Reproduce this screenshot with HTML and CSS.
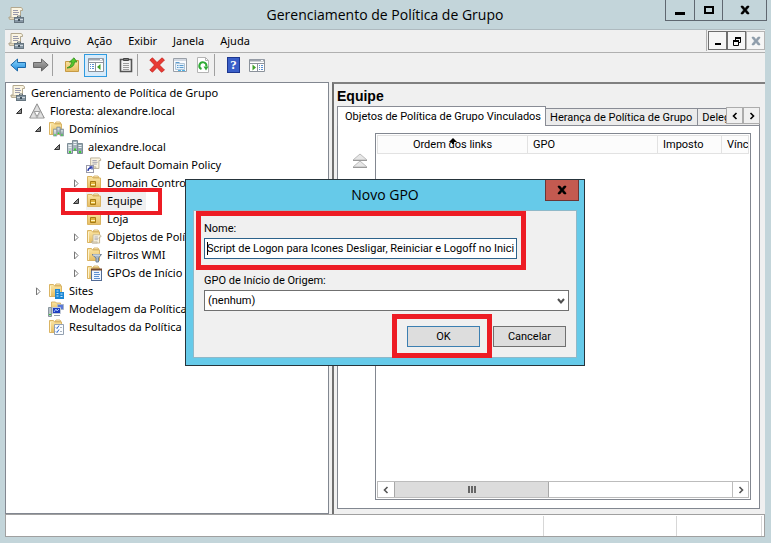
FILE: index.html
```html
<!DOCTYPE html>
<html lang="pt-BR">

<head>
  <meta charset="UTF-8">
  <meta name="viewport" content="width=device-width, initial-scale=1.0">
  <title>Gerenciamento de Política de Grupo</title>
  <link rel="stylesheet" href="styles.css">
</head>

<body>
  <!-- Shared icons -->
  <svg class="sprite" aria-hidden="true">
    <defs>
      <linearGradient id="gold" x1="0" y1="0" x2="0" y2="1">
        <stop offset="0" stop-color="#fbe6a6" />
        <stop offset="1" stop-color="#e6bd62" />
      </linearGradient>
      <linearGradient id="blue" x1="0" y1="0" x2="0" y2="1">
        <stop offset="0" stop-color="#8fd8fb" />
        <stop offset="1" stop-color="#1e8ae0" />
      </linearGradient>
      <linearGradient id="grey" x1="0" y1="0" x2="0" y2="1">
        <stop offset="0" stop-color="#b4b4b4" />
        <stop offset="1" stop-color="#6c6c6c" />
      </linearGradient>
    </defs>
    <symbol id="scroll" viewBox="0 0 16 16">
      <path d="M3 .5h10q2 .5 1.500 3h-2v9H2q-1.500-.5-1-2.500h2z" fill="#fbf5e2" stroke="#b3a88e" />
      <path d="M1 10.500h8v2H2z" fill="#e4dac0" stroke="#aaa08a" stroke-width=".6" />
      <path d="M5 3.500h5M5 5.500h6M5 7.500h5" stroke="#9a9aac" />
    </symbol>
    <symbol id="console" viewBox="0 0 16 16">
      <use href="#scroll" />
      <path d="M9.500 10.500V9h3v1.500" fill="none" stroke="#5d6a75" />
      <rect x="6.500" y="10.500" width="9" height="5" fill="#8797a4" stroke="#66757f" />
      <path d="M7 12.500h8" stroke="#cfd8de" />
      <rect x="10" y="12" width="2" height="2" fill="#40505c" />
    </symbol>
    <symbol id="forest" viewBox="0 0 16 16">
      <path d="M8 .8l7.300 14.200H.7z" fill="#c6c6c6" stroke="#929292" />
      <path d="M8 2.500l2.700 5.500H5.300zM4.400 9.500L7 14.500H1.800zM11.600 9.500l2.600 5H9z" fill="#e0e0e0" />
      <path d="M8 13.500L5.300 8.500h5.400z" fill="#fff" stroke="#8c8c8c" stroke-width=".8" />
    </symbol>
    <symbol id="folder" viewBox="0 0 16 16">
      <path d="M7 2.500l1-1.500h4l1 1.500z" fill="#fff3cc" stroke="#d0a652" stroke-width=".8" />
      <path d="M1.500 1.500h4l1 1.500h7v10.500h-12z" fill="url(#gold)" stroke="#dab463" />
      <path d="M2.500 3v10" stroke="#fff3cc" />
    </symbol>
    <symbol id="servers" viewBox="0 0 16 16">
      <path d="M5.500 1.500h5v10h-5z" fill="#a4b3bb" stroke="#7d8d96" />
      <path d="M.5 4.500h5v10h-5z" fill="#bac6cc" stroke="#7d8d96" />
      <path d="M10.500 4.500h5v10h-5z" fill="#94a5ae" stroke="#7d8d96" />
      <path d="M6.500 3.500h3M6.500 5.500h3M1.500 6.500h3M1.500 8.500h3M11.500 6.500h3M11.500 8.500h3" stroke="#eef3f5" />
      <path d="M7 10.500h2M2 13h2M12 13h2" stroke="#38d430" stroke-width="2" />
    </symbol>
    <symbol id="domains" viewBox="0 0 16 16">
      <use href="#folder" />
      <use href="#servers" x="5" y="5" width="11" height="11" />
    </symbol>
    <symbol id="policy-link" viewBox="0 0 16 16">
      <use href="#scroll" x="2" width="14" height="15" />
      <rect x=".5" y="8.500" width="7" height="7" fill="#fff" stroke="#9a9aa8" />
      <path d="M2 14q0-3 3-3M3.500 10H6v2.500" fill="none" stroke="#2b3ba8" stroke-width="1.300" />
    </symbol>
    <symbol id="unit" viewBox="0 0 16 16">
      <path d="M7 2.500l1-1.500h4l1 1.500z" fill="#fff3cc" stroke="#d0a652" stroke-width=".8" />
      <path d="M1.500 1.500h4.500l1 1.500h7.500v10.500h-13z" fill="url(#gold)" stroke="#dab463" />
      <path d="M4.500 6.500h5v5h-5z" fill="#dfb23c" stroke="#a57a14" />
      <path d="M5 9.500h4" stroke="#fff3b8" />
    </symbol>
    <symbol id="policies" viewBox="0 0 16 16">
      <use href="#folder" />
      <use href="#scroll" x="5" y="5" width="11" height="12" />
    </symbol>
    <symbol id="filters" viewBox="0 0 16 16">
      <use href="#folder" />
      <path d="M6 7.500h9.500L12.500 11v4h-2.500v-4z" fill="#a9b8c8" stroke="#6f8195" />
      <path d="M7 8h7" stroke="#e8eef4" />
    </symbol>
    <symbol id="starters" viewBox="0 0 16 16">
      <use href="#folder" />
      <rect x="5.500" y="4.500" width="10" height="11" fill="#edf5ff" stroke="#526b94" />
      <path d="M5 4.500h11" stroke="#76482c" stroke-width="2" />
      <path d="M8 7.500h5M8 9.500h6M8 11.500h5M8 13.500h6" stroke="#5d8fcf" />
    </symbol>
    <symbol id="sites" viewBox="0 0 16 16">
      <use href="#folder" />
      <path d="M7 6h5v3h4v7H7z" fill="#1b86d4" />
      <path d="M8.500 8h2M8.500 10.500h2M8.500 13h2M12.500 11h2M12.500 13.500h2" stroke="#c4e8ff" />
    </symbol>
    <symbol id="modeling" viewBox="0 0 16 16">
      <path d="M3.500 1h4l1 1h4V9h-9z" fill="url(#gold)" stroke="#d0a652" stroke-width=".8" />
      <path d="M.5 6.500h3v9h-3z" fill="#b7c2c8" stroke="#8a979f" />
      <path d="M9.500 3.500h6v5h-6z" fill="#5a78d8" stroke="#a9b4c4" />
      <path d="M4.500 6.500h8v6h-8z" fill="#1f3fc0" stroke="#c3cad6" />
      <path d="M6 11l2-3 1 2 2-2" fill="none" stroke="#a8c4ff" />
      <path d="M6 14.500h6" stroke="#8e9aa8" />
      <path d="M1 13.500h2" stroke="#38c830" />
    </symbol>
    <symbol id="results" viewBox="0 0 16 16">
      <use href="#folder" />
      <path d="M6.500 5.500h9v10h-9z" fill="#fbfdff" stroke="#93a0b0" />
      <path d="M8 8.500l1 1 2-3M8 12.500l1 1 2-3" fill="none" stroke="#2a64c8" />
      <path d="M12 8.500h2M12 12.500h2" stroke="#aab4c0" />
    </symbol>
    <symbol id="arrow-back" viewBox="0 0 16 16">
      <path d="M.8 8l6.700-6v3.500h8v5h-8V14z" fill="url(#blue)" stroke="#1c68a8" />
    </symbol>
    <symbol id="arrow-next" viewBox="0 0 16 16">
      <path d="M15.200 8L8.500 2v3.500h-8v5h8V14z" fill="url(#grey)" stroke="#686868" />
    </symbol>
    <symbol id="folder-up" viewBox="0 0 16 16">
      <path d="M1.500 4.500h6l1-1h6v11h-13z" fill="url(#gold)" stroke="#c79b45" />
      <path d="M3 11q4-1 5-6H5.500L10 .8 13 5h-2.500q-.5 6-7.500 6z" fill="#55c62e" stroke="#2f8d18" stroke-width=".8" />
    </symbol>
    <symbol id="panel-left" viewBox="0 0 16 16">
      <path d="M.5 1.500h15v13H.5z" fill="#fff" stroke="#8b929b" />
      <path d="M1 2.500h14" stroke="#a0a7b0" stroke-width="2" />
      <path d="M12 2.500h2" stroke="#fff" />
      <path d="M1 5.500h14M7.500 6v8" stroke="#8b929b" />
      <path d="M2 7.500h1M4 7.500h2M2 9.500h1M4 9.500h2M2 11.500h1M4 11.500h2" stroke="#5a8fd0" />
      <path d="M12.500 7v6L9 10z" fill="#3fa22a" />
    </symbol>
    <symbol id="panel-right" viewBox="0 0 16 16">
      <path d="M.5 2.500h15v12H.5z" fill="#fff" stroke="#8b929b" />
      <path d="M1 3.500h14" stroke="#a0a7b0" stroke-width="2" />
      <path d="M12 3.500h2" stroke="#fff" />
      <path d="M1 6.500h14M8.500 7v7" stroke="#8b929b" />
      <path d="M10 8.500h1M12 8.500h2M10 10.500h1M12 10.500h2M10 12.500h1M12 12.500h2" stroke="#5a8fd0" />
      <path d="M3.500 7.500v6L7 10.500z" fill="#3fa22a" />
    </symbol>
    <symbol id="clipboard" viewBox="0 0 16 16">
      <path d="M2.500 2.500h11v12h-11z" fill="#f2f2f2" stroke="#555" stroke-width="1.600" />
      <path d="M5.500 3.500v-2h5v2z" fill="#777" stroke="#444" />
      <path d="M5 6.500h6M5 8.500h6M5 10.500h6M5 12.500h6" stroke="#9c9c9c" />
    </symbol>
    <symbol id="delete" viewBox="0 0 16 16">
      <path d="M.8 3L3.500.8 8 5.500 13 .8 15.500 3 10.500 8l5 5-3 2.300L8 10.500l-4.500 4.700L.8 13 5.500 8z" fill="#e83a34" stroke="#c01a15" stroke-width=".7" />
    </symbol>
    <symbol id="properties" viewBox="0 0 16 16">
      <path d="M1.500 1.500h13v13h-13z" fill="#fafcff" stroke="#9aa0a8" />
      <path d="M2 3h12" stroke="#d3d9e2" stroke-width="2" />
      <path d="M3.500 6.500h9v6h-9z" fill="#e6f2fc" stroke="#b0c4d6" />
      <path d="M3.500 5.500h4M5 8.500h1.500M5 10.500h1.500M7.500 8.500h4M7.500 10.500h4" stroke="#5d9ccf" />
      <path d="M6 13.500h3M10 13.500h3" stroke="#4fb4e8" />
    </symbol>
    <symbol id="refresh" viewBox="0 0 16 16">
      <path d="M2.500.5h8l3 3v12h-11z" fill="#fff" stroke="#b4b4b4" />
      <path d="M10.500.5v3h3" fill="none" stroke="#b4b4b4" />
      <path d="M6.500 12A3.500 3.500 0 1 1 11.300 9.500" fill="none" stroke="#2faa36" stroke-width="2" />
      <path d="M8.500 9.500h5l-2.500 4z" fill="#2faa36" />
    </symbol>
    <symbol id="chevron-left" viewBox="0 0 8 8">
      <path d="M5.500 1L2.500 4l3 3" fill="none" stroke="currentColor" stroke-width="1.600" />
    </symbol>
    <symbol id="chevron-right" viewBox="0 0 8 8">
      <path d="M2.500 1l3 3-3 3" fill="none" stroke="currentColor" stroke-width="1.600" />
    </symbol>
    <symbol id="minimize" viewBox="0 0 12 12">
      <path d="M1 9.500h10" stroke="currentColor" stroke-width="3" />
    </symbol>
    <symbol id="minimize-child" viewBox="0 0 12 12">
      <path d="M3 9h6" stroke="currentColor" stroke-width="2" />
    </symbol>
    <symbol id="maximize" viewBox="0 0 12 12">
      <path d="M2 3h8v6H2z" fill="none" stroke="currentColor" stroke-width="2" />
    </symbol>
    <symbol id="restore" viewBox="0 0 12 12">
      <path d="M2.500 6h5v4.500h-5z" fill="none" stroke="currentColor" />
      <path d="M2 6h6M4 3h6" stroke="currentColor" stroke-width="2" />
      <path d="M4.500 5V3M9.500 3v4.500H8" fill="none" stroke="currentColor" />
    </symbol>
    <symbol id="close" viewBox="0 0 12 12">
      <path d="M2 2h2l2 2.500L8 2h2v1L7.500 6 10 9v1H8L6 7.500 4 10H2V9l2.500-3L2 3z" fill="currentColor" stroke="currentColor" stroke-width=".5" />
    </symbol>
    <symbol id="opened" viewBox="0 0 8 8">
      <path d="M6.500 1.500v5h-5z" fill="#8a8a8a" stroke="#333" />
    </symbol>
    <symbol id="closed" viewBox="0 0 8 8">
      <path d="M2.500.8L6 4.500 2.500 8z" fill="#fff" stroke="#777" />
    </symbol>
  </svg>

  <div class="window">
    <header class="titlebar">
      <svg class="icon"><use href="#console" /></svg>
      <h1>Gerenciamento de Política de Grupo</h1>
      <div class="window-buttons">
        <button type="button" aria-label="Minimizar"><svg><use href="#minimize" /></svg></button>
        <button type="button" aria-label="Maximizar"><svg><use href="#maximize" /></svg></button>
        <button type="button" class="wide" aria-label="Fechar"><svg><use href="#close" /></svg></button>
      </div>
    </header>

    <nav class="menubar">
      <svg class="icon"><use href="#console" /></svg>
      <button type="button">Arquivo</button>
      <button type="button">Ação</button>
      <button type="button">Exibir</button>
      <button type="button">Janela</button>
      <button type="button">Ajuda</button>
      <div class="child-buttons">
        <button type="button" aria-label="Minimizar janela"><svg><use href="#minimize-child" /></svg></button>
        <button type="button" aria-label="Restaurar janela"><svg><use href="#restore" /></svg></button>
        <button type="button" aria-label="Fechar janela" disabled><svg><use href="#close" /></svg></button>
      </div>
    </nav>

    <div class="toolbar">
      <button type="button" aria-label="Voltar"><svg class="icon"><use href="#arrow-back" /></svg></button>
      <button type="button" aria-label="Avançar"><svg class="icon"><use href="#arrow-next" /></svg></button>
      <span class="separator"></span>
      <button type="button" aria-label="Um nível acima"><svg class="icon"><use href="#folder-up" /></svg></button>
      <button type="button" class="pressed" aria-label="Árvore do console"><svg class="icon"><use href="#panel-left" /></svg></button>
      <button type="button" aria-label="Copiar"><svg class="icon"><use href="#clipboard" /></svg></button>
      <span class="separator"></span>
      <button type="button" aria-label="Excluir"><svg class="icon"><use href="#delete" /></svg></button>
      <button type="button" aria-label="Propriedades"><svg class="icon"><use href="#properties" /></svg></button>
      <button type="button" aria-label="Atualizar"><svg class="icon"><use href="#refresh" /></svg></button>
      <span class="separator"></span>
      <button type="button" class="help" aria-label="Ajuda"><span>?</span></button>
      <button type="button" aria-label="Painel de ações"><svg class="icon"><use href="#panel-right" /></svg></button>
    </div>

    <main class="panes">
      <section class="tree">
        <div class="node"><svg class="icon"><use href="#console" /></svg><span>Gerenciamento de Política de Grupo</span></div>
        <ul class="first">
          <li>
            <div class="node"><i><svg><use href="#opened" /></svg></i><svg class="icon"><use href="#forest" /></svg><span>Floresta: alexandre.local</span></div>
            <ul>
              <li>
                <div class="node"><i><svg><use href="#opened" /></svg></i><svg class="icon"><use href="#domains" /></svg><span>Domínios</span></div>
                <ul>
                  <li>
                    <div class="node"><i><svg><use href="#opened" /></svg></i><svg class="icon"><use href="#servers" /></svg><span>alexandre.local</span></div>
                    <ul>
                      <li><div class="node"><i></i><svg class="icon"><use href="#policy-link" /></svg><span>Default Domain Policy</span></div></li>
                      <li><div class="node"><i><svg><use href="#closed" /></svg></i><svg class="icon"><use href="#unit" /></svg><span>Domain Controllers</span></div></li>
                      <li class="marked"><div class="node selected"><i><svg><use href="#opened" /></svg></i><svg class="icon"><use href="#unit" /></svg><span>Equipe</span></div></li>
                      <li><div class="node"><i></i><svg class="icon"><use href="#unit" /></svg><span>Loja</span></div></li>
                      <li><div class="node"><i><svg><use href="#closed" /></svg></i><svg class="icon"><use href="#policies" /></svg><span>Objetos de Política</span></div></li>
                      <li><div class="node"><i><svg><use href="#closed" /></svg></i><svg class="icon"><use href="#filters" /></svg><span>Filtros WMI</span></div></li>
                      <li><div class="node"><i><svg><use href="#closed" /></svg></i><svg class="icon"><use href="#starters" /></svg><span>GPOs de Início</span></div></li>
                    </ul>
                  </li>
                </ul>
              </li>
              <li><div class="node"><i><svg><use href="#closed" /></svg></i><svg class="icon"><use href="#sites" /></svg><span>Sites</span></div></li>
              <li><div class="node"><i></i><svg class="icon"><use href="#modeling" /></svg><span>Modelagem da Política</span></div></li>
              <li><div class="node"><i></i><svg class="icon"><use href="#results" /></svg><span>Resultados da Política</span></div></li>
            </ul>
          </li>
        </ul>
      </section>

      <section class="details">
        <h2>Equipe</h2>
        <div class="tabs">
          <button type="button" class="tab active">Objetos de Política de Grupo Vinculados</button>
          <button type="button" class="tab">Herança de Política de Grupo</button>
          <button type="button" class="tab">Delegação</button>
          <div class="tab-scroll">
            <button type="button" aria-label="Guias anteriores"><svg><use href="#chevron-left" /></svg></button>
            <button type="button" aria-label="Próximas guias"><svg><use href="#chevron-right" /></svg></button>
          </div>
        </div>
        <div class="tab-page">
          <svg class="move-top" viewBox="0 0 16 16">
            <path d="M8 1l7 6H1zM8 8l7 6H1z" fill="#e6e6e6" stroke="#bbb" />
            <path d="M1 7.500h14M1 14.500h14" stroke="#999" />
          </svg>
          <div class="list">
            <table>
              <thead>
                <tr>
                  <th class="order">Ordem dos links<svg viewBox="0 0 8 8"><path d="M4 0l4 4H5v2H3V4H0z" /></svg></th>
                  <th class="gpo">GPO</th>
                  <th class="enforced">Imposto</th>
                  <th>Vínculo</th>
                </tr>
              </thead>
            </table>
            <div class="scrollbar">
              <button type="button" aria-label="Rolar para a esquerda"><svg><use href="#chevron-left" /></svg></button>
              <div class="track"><div class="thumb"></div></div>
              <button type="button" aria-label="Rolar para a direita"><svg><use href="#chevron-right" /></svg></button>
            </div>
          </div>
        </div>
      </section>
    </main>

    <footer class="statusbar"><span></span><span></span><span></span></footer>
  </div>

  <form class="dialog" role="dialog" aria-labelledby="dialog-title">
    <header>
      <h2 id="dialog-title">Novo GPO</h2>
      <button type="button" class="dialog-close" aria-label="Fechar"><svg><use href="#close" /></svg></button>
    </header>
    <div class="dialog-body">
      <div class="name-field">
        <label for="name">Nome:</label>
        <input type="text" id="name" value="Script de Logon para Icones Desligar, Reiniciar e Logoff no Inici">
      </div>
      <label for="source">GPO de Início de Origem:</label>
      <div class="select">
        <select id="source">
          <option>(nenhum)</option>
        </select>
        <svg viewBox="0 0 8 8"><path d="M1 2l3 3.500L7 2" fill="none" stroke="#505050" stroke-width="2" /></svg>
      </div>
      <div class="actions">
        <span class="ok"><button type="button" class="default">OK</button></span>
        <button type="button">Cancelar</button>
      </div>
    </div>
  </form>
</body>

</html>
```
FILE: styles.css
```css
*,
*::after {
  box-sizing: border-box;
}

body {
  margin: 0;
  background-color: #c3d5da;
  color: #000;
  font-family: "Noto Sans", "Open Sans", sans-serif;
  font-size: 11px;
}

h1,
h2,
ul {
  margin: 0;
  padding: 0;
  font-weight: normal;
}

button {
  display: flex;
  align-items: center;
  justify-content: center;
  padding: 0;
  border: 0;
  background: none;
  color: inherit;
  font: inherit;
}

svg {
  display: block;
  flex: none;
}

.sprite {
  position: absolute;
  width: 0;
  height: 0;
}

.icon {
  width: 16px;
  height: 16px;
}

.window {
  display: flex;
  flex-direction: column;
  height: 100vh;
  padding: 0 6px 6px 5px;
}

/* Title bar */
.titlebar {
  display: grid;
  grid-template-columns: 100px 1fr 100px;
  height: 29px;
}

.titlebar .icon {
  margin: 7px 0 0 3px;
}

.titlebar h1 {
  font: 14px/29px "Open Sans", "Noto Sans", sans-serif;
  text-align: center;
}

.window-buttons {
  display: flex;
  height: 21px;
  margin-right: -2px;
  border: 1px solid #5f6770;
  border-top: 0;
}

.window-buttons button {
  width: 28px;
}

.window-buttons button + button {
  border-left: 1px solid #5f6770;
}

.window-buttons .wide {
  flex: 1;
}

.window-buttons svg,
.child-buttons svg,
.dialog-close svg {
  width: 12px;
  height: 12px;
}

/* Menu */
.menubar {
  display: flex;
  align-items: center;
  gap: 16px;
  height: 24px;
  padding: 0 0 1px 3px;
  border-top: 1px solid #aebabf;
  border-bottom: 1px solid #b0b0b0;
  background-color: #f0f0f0;
}

.menubar .icon {
  margin-right: -9px;
}

.child-buttons {
  display: flex;
  height: 21px;
  margin-left: auto;
  padding: 1px 0 1px 1px;
  border-left: 1px solid #b0b0b0;
}

.child-buttons button {
  width: 19px;
  border: 1px solid #6e6e6e;
  background-color: #f6f6f6;
}

.child-buttons button:disabled {
  border-color: #b4b4b4;
  color: #8f9dab;
}

/* Toolbar */
.toolbar {
  display: flex;
  align-items: center;
  height: 29px;
  padding: 0 1px 5px;
  background-color: #f0f0f0;
}

.toolbar button {
  width: 23px;
  height: 23px;
}

.toolbar .pressed {
  margin: 0 7px 0 1px;
  border: 1px solid #2f9be0;
  background-color: #d8ebfa;
}

.separator {
  width: 1px;
  height: 22px;
  margin: 0 7px 0 0;
  background-color: #a0a0a0;
}

.help span {
  width: 13px;
  height: 16px;
  border: 1px solid #1c3690;
  background-color: #3a5fc8;
  color: #fff;
  font: bold 13px/14px "Liberation Serif", serif;
}

/* Panes */
.panes {
  display: flex;
  flex: 1;
  min-height: 0;
  background-color: #f0f0f0;
}

.tree {
  width: 324px;
  padding: 1px 4px;
  border: 1px solid #828790;
  background-color: #fff;
  overflow: hidden;
}

.tree ul {
  list-style: none;
  padding-left: 19px;
}

.tree .first {
  padding-left: 5px;
}

.node {
  display: flex;
  align-items: center;
  height: 18px;
  line-height: 18px;
  white-space: nowrap;
}

.node i {
  width: 14px;
}

.node i svg {
  width: 8px;
  height: 8px;
}

.node span {
  padding: 0 3px 0 5px;
}

.selected {
  width: max-content;
  background: linear-gradient(#f0f0f0, #f0f0f0) 14px 0 no-repeat;
}

.marked {
  position: relative;
}

/* Red highlight frames */
.marked::after,
.name-field::after,
.ok::after {
  content: "";
  position: absolute;
  border: 5px solid #ed1c24;
  pointer-events: none;
}

.marked::after {
  top: -4px;
  left: -11px;
  width: 101px;
  height: 27px;
  border-width: 4px;
}

/* Details */
.details {
  display: flex;
  flex: 1;
  flex-direction: column;
  min-width: 0;
  margin-left: 3px;
  padding: 2px 5px 5px 3px;
  border-top: 2px solid #808080;
  border-left: 2px solid #707070;
  font-family: Roboto, "Liberation Sans", sans-serif;
}

.details h2 {
  height: 20px;
  font: bold 14px/20px "Liberation Sans", Arial, sans-serif;
}

.tabs {
  display: flex;
  position: relative;
  align-items: flex-end;
  height: 20px;
  overflow: hidden;
}

.tab {
  flex: none;
  height: 18px;
  padding: 0 5px 0 4px;
  border: 1px solid #898c95;
  border-bottom: 0;
  border-left: 0;
  background-color: #ebebeb;
  white-space: nowrap;
}

.tab.active {
  height: 20px;
  padding: 0 4px 0 7px;
  border-left: 1px solid #898c95;
  background-color: #fff;
}

/* line under the tabs that are not active */
.tab:not(.active) {
  border-bottom: 1px solid #898c95;
}

.tab-scroll {
  display: flex;
  position: absolute;
  top: 1px;
  right: 0;
  height: 17px;
}

.tab-scroll button {
  width: 17px;
  border: 1px solid #acacac;
  background-color: #f0f0f0;
}

.tab-scroll svg,
.scrollbar svg {
  width: 8px;
  height: 8px;
}

.tab-page {
  display: flex;
  flex: 1;
  min-height: 0;
  padding: 7px 8px 8px 14px;
  border: 1px solid #828790;
  border-top: 0;
  background-color: #fff;
}

.move-top {
  width: 16px;
  height: 16px;
  margin: 20px 7px 0 0;
}

.list {
  display: flex;
  flex: 1;
  flex-direction: column;
  min-width: 0;
  padding: 1px;
  border: 1px solid #828790;
  overflow: hidden;
}

.list table {
  width: 100%;
  border-collapse: collapse;
  table-layout: fixed;
}

.list th {
  height: 18px;
  padding: 0 5px;
  border: 1px solid #e2e2e2;
  background-color: #fcfcfc;
  font-weight: normal;
  text-align: left;
  white-space: nowrap;
  overflow: hidden;
}

.list .order {
  position: relative;
  width: 150px;
  text-align: center;
}

.order svg {
  position: absolute;
  top: 2px;
  left: calc(50% - 4px);
  width: 8px;
  height: 8px;
}

.list .gpo {
  width: 130px;
}

.list .enforced {
  width: 64px;
}

.scrollbar {
  display: flex;
  height: 17px;
  margin-top: auto;
  border: 1px solid #bcbcbc;
  color: #555;
}

.scrollbar button {
  width: 16px;
}

.scrollbar button:last-child {
  border-left: 1px solid #bcbcbc;
}

.track {
  flex: 1;
}

.thumb {
  width: 46%;
  height: 15px;
  border: 1px solid #a8a8a8;
  border-width: 0 1px;
  background: repeating-linear-gradient(90deg, #666 0 2px, transparent 2px 3px) center / 8px 7px no-repeat #dcdcdc;
}

/* Status bar */
.statusbar {
  display: flex;
  height: 23px;
  padding: 1px 2px 0 0;
  border: 1px solid #a0a0a0;
  background-color: #fff;
}

.statusbar span {
  width: 85px;
  border-right: 1px solid #d7d7d7;
}

.statusbar span:first-child {
  flex: 1;
}

.statusbar span:nth-child(2) {
  width: 133px;
}

/* New GPO dialog */
.dialog {
  position: absolute;
  top: 179px;
  left: 185px;
  width: 400px;
  padding: 0 7px 7px;
  border: 1px solid #26343b;
  background-color: #66cae9;
  font-family: Roboto, "Liberation Sans", sans-serif;
}

.dialog header {
  position: relative;
  height: 30px;
}

.dialog h2 {
  font: 14px/30px "Open Sans", "Noto Sans", sans-serif;
  text-align: center;
}

.dialog-close {
  position: absolute;
  top: 0;
  right: -2px;
  width: 34px;
  height: 21px;
  border: 1px solid #6b3535;
  border-top: 0;
  background-color: #c35a50;
}

.dialog-body {
  padding: 10px 7px 10px 10px;
  border: 1px solid #8fb9c9;
  background-color: #f0f0f0;
}

.dialog label {
  display: block;
  height: 17px;
  line-height: 16px;
}

.name-field {
  position: relative;
  margin-bottom: 14px;
}

.name-field::after {
  top: -10px;
  left: -8px;
  width: 330px;
  height: 59px;
}

.dialog input,
.dialog select {
  display: block;
  height: 21px;
  margin: 0;
  border: 1px solid #707070;
  border-radius: 0;
  background-color: #fff;
  color: #000;
  font: inherit;
}

/* the thin stripe is the text cursor */
.dialog input {
  width: 313px;
  padding: 0 0 0 2px;
  border-color: #2c628b;
  background: linear-gradient(#000, #000) 2px 3px / 1px 13px no-repeat #fff;
}

.select {
  position: relative;
}

.dialog select {
  appearance: none;
  width: 100%;
  padding: 0 3px;
}

.select svg {
  position: absolute;
  top: 7px;
  right: 4px;
  width: 8px;
  height: 8px;
}

.actions {
  display: flex;
  justify-content: flex-end;
  gap: 13px;
  margin: 15px 3px 0 0;
}

.actions button {
  width: 73px;
  height: 21px;
  border: 1px solid #707070;
  background-color: #ddd;
}

.actions .default {
  border-color: #3c7fb1;
}

.ok {
  position: relative;
}

.ok::after {
  top: -12px;
  left: -15px;
  width: 100px;
  height: 44px;
}
```
